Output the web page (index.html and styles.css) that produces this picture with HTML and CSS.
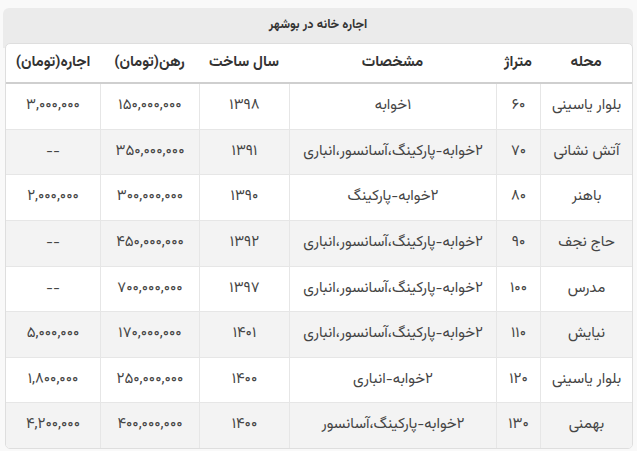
FILE: index.html
```html
<!DOCTYPE html>
<html lang="fa" dir="rtl">
<head>
<meta charset="utf-8">
<title>اجاره خانه در بوشهر</title>
<link rel="stylesheet" href="styles.css">
</head>
<body>
<div class="box">
  <div class="caption">اجاره خانه در بوشهر</div>
  <div class="table-wrap">
    <table class="grid">
      <colgroup>
        <col class="c-area"><col class="c-size"><col class="c-desc"><col class="c-year"><col class="c-mortgage"><col class="c-rent">
      </colgroup>
      <thead>
        <tr><th>محله</th><th>متراژ</th><th>مشخصات</th><th>سال ساخت</th><th>رهن(تومان)</th><th>اجاره(تومان)</th></tr>
      </thead>
      <tbody>
        <tr><td>بلوار یاسینی</td><td>۶۰</td><td>۱خوابه</td><td>۱۳۹۸</td><td>۱۵۰,۰۰۰,۰۰۰</td><td>۳,۰۰۰,۰۰۰</td></tr>
        <tr><td>آتش نشانی</td><td>۷۰</td><td>۲خوابه-پارکینگ،آسانسور،انباری</td><td>۱۳۹۱</td><td>۳۵۰,۰۰۰,۰۰۰</td><td>--</td></tr>
        <tr><td>باهنر</td><td>۸۰</td><td>۲خوابه-پارکینگ</td><td>۱۳۹۰</td><td>۳۰۰,۰۰۰,۰۰۰</td><td>۲,۰۰۰,۰۰۰</td></tr>
        <tr><td>حاج نجف</td><td>۹۰</td><td>۲خوابه-پارکینگ،آسانسور،انباری</td><td>۱۳۹۲</td><td>۴۵۰,۰۰۰,۰۰۰</td><td>--</td></tr>
        <tr><td>مدرس</td><td>۱۰۰</td><td>۲خوابه-پارکینگ،آسانسور،انباری</td><td>۱۳۹۷</td><td>۷۰۰,۰۰۰,۰۰۰</td><td>--</td></tr>
        <tr><td>نیایش</td><td>۱۱۰</td><td>۲خوابه-پارکینگ،آسانسور،انباری</td><td>۱۴۰۱</td><td>۱۷۰,۰۰۰,۰۰۰</td><td>۵,۰۰۰,۰۰۰</td></tr>
        <tr><td>بلوار یاسینی</td><td>۱۲۰</td><td>۲خوابه-انباری</td><td>۱۴۰۰</td><td>۲۵۰,۰۰۰,۰۰۰</td><td>۱,۸۰۰,۰۰۰</td></tr>
        <tr><td>بهمنی</td><td>۱۳۰</td><td>۲خوابه-پارکینگ،آسانسور</td><td>۱۴۰۰</td><td>۴۰۰,۰۰۰,۰۰۰</td><td>۴,۲۰۰,۰۰۰</td></tr>
      </tbody>
    </table>
  </div>
</div>
</body>
</html>
```
FILE: styles.css
```css
html, body {
  margin: 0;
  padding: 0;
  background: #f9f9f9;
}
body {
  font-family: "Vazirmatn", "Noto Sans Arabic", "DejaVu Sans", sans-serif;
  color: #333;
}
.box {
  margin: 8px 4px 0 3px;
  width: 630px;
  border-radius: 6px 6px 0 0;
  background: linear-gradient(#ebebeb 0, #ebebeb 40px, transparent 40px);
}
.caption {
  height: 34.7px;
  line-height: 34.7px;
  text-align: center;
  font-size: 12.6px;
  font-weight: bold;
  color: #333;
}
.table-wrap {
  width: 626px;
  background: #fff;
  border: 1px solid #dedede;
  border-radius: 5px;
  overflow: hidden;
}
.grid {
  width: 100%;
  border-spacing: 0;
  table-layout: fixed;
}
.c-area { width: 92px; }
.c-size { width: 44px; }
.c-desc { width: 207px; }
.c-year { width: 90px; }
.c-mortgage { width: 99px; }
.c-rent { width: auto; }
.grid th {
  padding: 7px 2px;
  line-height: 24.6px;
  font-size: 15px;
  font-weight: bold;
  color: #333;
  text-align: center;
  border-bottom: 2px solid #cfcfcf;
  white-space: nowrap;
}
.grid td {
  padding: 10px 2px;
  line-height: 24.6px;
  font-size: 15px;
  color: #444;
  text-align: center;
  border-bottom: 1px solid #e6e6e6;
  white-space: nowrap;
}
.grid td:not(:last-child) {
  border-left: 1px solid #e6e6e6;
}
.grid tbody tr:nth-child(even) td {
  background: #f3f3f3;
}
.grid tbody tr:last-child td {
  border-bottom: 0;
}
```
